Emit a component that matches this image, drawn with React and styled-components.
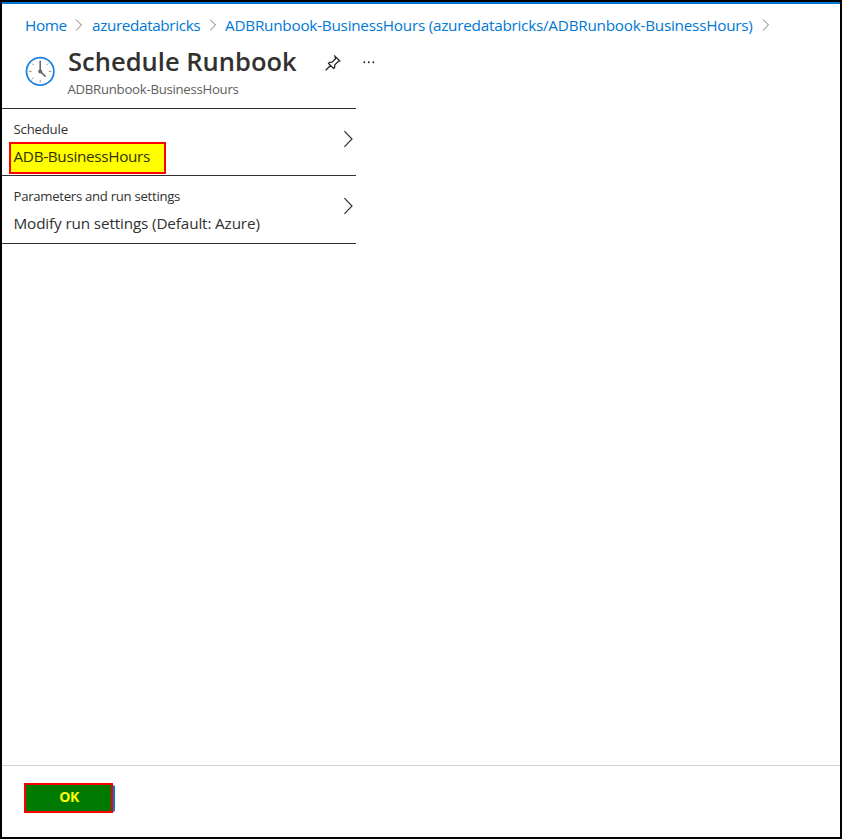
import React from "react";
import styled, { createGlobalStyle } from "styled-components";

const Global = createGlobalStyle`
  *, *::before, *::after { box-sizing: border-box; }
  body { margin: 0; background: #fff; font-family: "Open Sans", "Noto Sans", sans-serif; color: #323130; }
`;

const Page = styled.div`
  width: 842px;
  height: 839px;
  border: 2px solid #000;
  background: #fff;
  display: flex;
  flex-direction: column;
  overflow: hidden;
`;

const TopBar = styled.div`
  height: 2px;
  flex: none;
  background: #0078d4;
`;

const Breadcrumb = styled.nav`
  display: flex;
  align-items: center;
  height: 42px;
  flex: none;
  padding-left: 23px;
`;

const Crumb = styled.a`
  width: ${(p) => p.$width}px;
  flex: none;
  color: #0078d4;
  font-size: 15.3px;
  line-height: 22px;
  letter-spacing: ${(p) => p.$spacing}px;
  white-space: nowrap;
`;

const CrumbChevron = styled.svg`
  width: 8px;
  height: 12px;
  flex: none;
  margin: 0 ${(p) => p.$after}px 1px 8px;
  fill: none;
  stroke: #7a7876;
`;

const Header = styled.header`
  display: flex;
  height: 62px;
  flex: none;
  padding-left: 23px;
`;

const ClockIcon = styled.svg`
  width: 30px;
  height: 30px;
  flex: none;
  margin: 10px 12px 0 0;
`;

const Heading = styled.div`
  width: 258px;
  flex: none;
`;

const Title = styled.h1`
  margin: 0;
  padding-left: 1px;
  font-size: 25.5px;
  line-height: 30px;
  font-weight: 600;
  letter-spacing: ${(p) => p.$spacing}px;
  white-space: nowrap;
`;

const Subtitle = styled.div`
  margin-top: 3px;
  padding-left: 0.5px;
  color: #605e5c;
  font-size: 13.2px;
  line-height: 20px;
  letter-spacing: ${(p) => p.$spacing}px;
  white-space: nowrap;
`;

const PinIcon = styled.svg`
  width: 16px;
  height: 16px;
  flex: none;
  margin: 8.5px 21px 0 0;
  fill: none;
  stroke: #252423;
  stroke-width: 1.25;
`;

const MoreIcon = styled.svg`
  width: 14px;
  height: 4px;
  flex: none;
  margin-top: 14px;
  fill: #252423;
`;

const Settings = styled.main`
  width: 354px;
  flex: 1;
`;

const SettingRow = styled.section`
  display: flex;
  justify-content: space-between;
  height: ${(p) => p.$height}px;
  border-top: 1px solid #323130;
  padding: 10px 3px 0 11px;
  &:last-child { border-bottom: 1px solid #323130; }
`;

const Label = styled.div`
  padding-left: 0.5px;
  font-size: 13.2px;
  line-height: 20px;
  letter-spacing: ${(p) => p.$spacing}px;
  white-space: nowrap;
`;

const Value = styled.div`
  margin-top: 6px;
  padding-left: 0.5px;
  font-size: 15.3px;
  line-height: 22px;
  letter-spacing: ${(p) => p.$spacing}px;
  white-space: nowrap;
`;

const HighlightedValue = styled(Value)`
  width: 157px;
  height: 32px;
  margin: 3px 0 0 -4px;
  padding: 1px 0 0 2.5px;
  border: 2px solid #f00;
  background: #ff0;
  color: #323100;
`;

const RowChevron = styled.svg`
  width: 10px;
  height: 18px;
  flex: none;
  margin-top: 11px;
  fill: none;
  stroke: #323130;
  stroke-width: 1.2;
`;

const Footer = styled.footer`
  height: 72px;
  flex: none;
  border-top: 1px solid #d2d0ce;
  padding: 17px 22px;
`;

const OkButton = styled.button`
  display: block;
  width: 89px;
  height: 30px;
  border: 2px solid #f00;
  background: #007a00;
  padding: 0 0 3px 1px;
  color: #ff0;
  font: 700 14px/20px "Open Sans", sans-serif;
  letter-spacing: -0.5px;
`;

const ButtonEdge = styled.div`
  display: flex;
  align-items: center;
  &::after {
    content: "";
    width: 2px;
    height: 27px;
    border-radius: 0 2px 2px 0;
    background: #0078d4;
  }
`;

function Chevron({ after = 0 }) {
  return (
    <CrumbChevron $after={after} viewBox="0 0 8 12">
      <path d="M1.2.7 6.5 6 1.2 11.3" />
    </CrumbChevron>
  );
}

function Next() {
  return (
    <RowChevron viewBox="0 0 10 18">
      <path d="M1.4 1.2 9 9 1.4 16.8" />
    </RowChevron>
  );
}

function Clock() {
  return (
    <ClockIcon viewBox="0 0 30 30">
      <circle cx="15.2" cy="15.4" r="13.7" fill="#fff" stroke="#1f84dc" strokeWidth="1.8" />
      <path d="M15.2 24v2.7M4 15.4h2.6M23.8 15.4h2.6M7 7.5l1.7 1.7M21.5 9.2l1.7-1.7M7 23.3l1.7-1.7" stroke="#949494" strokeWidth="1" />
      <path d="M15.2 4.8v10.6l5.4 5.2" fill="none" stroke="#686868" strokeWidth="1.6" />
      <circle cx="15.2" cy="15.4" r="2" fill="#666" />
    </ClockIcon>
  );
}

export default function App() {
  return (
    <>
      <Global />
      <Page>
        <TopBar />
        <Breadcrumb>
          <Crumb $width={42} $spacing={-0.35}>Home</Crumb>
          <Chevron after={9} />
          <Crumb $width={109} $spacing={-0.37}>azuredatabricks</Crumb>
          <Chevron after={8} />
          <Crumb $width={529} $spacing={-0.25}>ADBRunbook-BusinessHours (azuredatabricks/ADBRunbook-BusinessHours)</Crumb>
          <Chevron />
        </Breadcrumb>
        <Header>
          <Clock />
          <Heading>
            <Title $spacing={0.02}>Schedule Runbook</Title>
            <Subtitle $spacing={-0.27}>ADBRunbook-BusinessHours</Subtitle>
          </Heading>
          <PinIcon viewBox="0 0 16 16">
            <path d="m10 1.3 4.7 4.7-1.5.5-3.4 3.4-.2 2.7-1 .9-5.1-5.1.9-1 2.7-.2 3.4-3.4zM5.7 10.3l-5 5" />
          </PinIcon>
          <MoreIcon viewBox="0 0 14 4">
            <circle cx="2.3" cy="2.3" r=".95" />
            <circle cx="6.8" cy="2.3" r=".95" />
            <circle cx="11.3" cy="2.3" r=".95" />
          </MoreIcon>
        </Header>
        <Settings>
          <SettingRow $height={67}>
            <div>
              <Label $spacing={-0.2}>Schedule</Label>
              <HighlightedValue $spacing={-0.32}>ADB-BusinessHours</HighlightedValue>
            </div>
            <Next />
          </SettingRow>
          <SettingRow $height={69}>
            <div>
              <Label $spacing={-0.3}>Parameters and run settings</Label>
              <Value $spacing={-0.15}>Modify run settings (Default: Azure)</Value>
            </div>
            <Next />
          </SettingRow>
        </Settings>
        <Footer>
          <ButtonEdge>
            <OkButton>OK</OkButton>
          </ButtonEdge>
        </Footer>
      </Page>
    </>
  );
}
